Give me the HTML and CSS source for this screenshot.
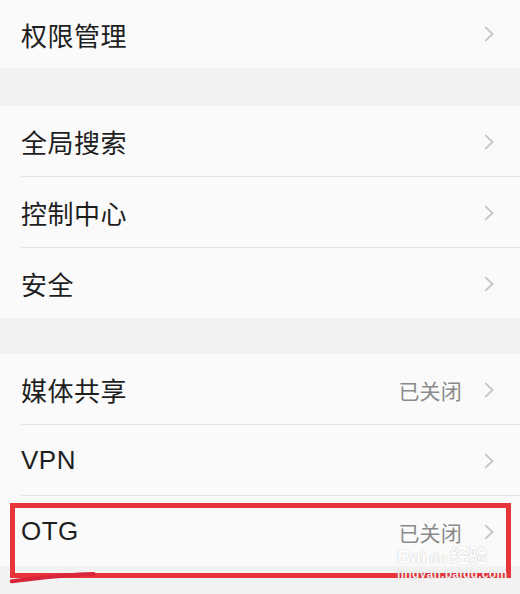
FILE: index.html
```html
<!DOCTYPE html>
<html lang="zh-CN">
<head>
<meta charset="utf-8">
<title>设置</title>
<link rel="stylesheet" href="styles.css">
</head>
<body>
<div class="screen">
  <div class="group">
    <div class="row row-first"><span class="label">权限管理</span><span class="right"><svg class="chev" viewBox="0 0 10 16"><path d="M1.2 1.2 L8.6 8 L1.2 14.8"/></svg></span></div>
  </div>
  <div class="gap gap-a"></div>
  <div class="group">
    <div class="row"><span class="label">全局搜索</span><span class="right"><svg class="chev" viewBox="0 0 10 16"><path d="M1.2 1.2 L8.6 8 L1.2 14.8"/></svg></span></div>
    <div class="row"><span class="label">控制中心</span><span class="right"><svg class="chev" viewBox="0 0 10 16"><path d="M1.2 1.2 L8.6 8 L1.2 14.8"/></svg></span></div>
    <div class="row"><span class="label">安全</span><span class="right"><svg class="chev" viewBox="0 0 10 16"><path d="M1.2 1.2 L8.6 8 L1.2 14.8"/></svg></span></div>
  </div>
  <div class="gap gap-b"></div>
  <div class="group">
    <div class="row"><span class="label">媒体共享</span><span class="right"><span class="value">已关闭</span><svg class="chev" viewBox="0 0 10 16"><path d="M1.2 1.2 L8.6 8 L1.2 14.8"/></svg></span></div>
    <div class="row"><span class="label">VPN</span><span class="right"><svg class="chev" viewBox="0 0 10 16"><path d="M1.2 1.2 L8.6 8 L1.2 14.8"/></svg></span></div>
    <div class="row"><span class="label">OTG</span><span class="right"><span class="value">已关闭</span><svg class="chev" viewBox="0 0 10 16"><path d="M1.2 1.2 L8.6 8 L1.2 14.8"/></svg></span></div>
  </div>
  <div class="gap"></div>

  <div class="highlight"></div>
  <svg class="swoosh" viewBox="0 0 100 20"><path d="M3 17 C 30 14, 55 10, 94 9"/></svg>
  <div class="watermark">
    <div class="wm-top">Bai<span class="wm-paw">du</span>经验</div>
    <div class="wm-url">jingyan.baidu.com</div>
  </div>
</div>
</body>
</html>
```

FILE: styles.css
```css
html, body {
  margin: 0;
  padding: 0;
}
body {
  background: #f2f2f2;
  font-family: "Liberation Sans", "Noto Sans CJK SC", sans-serif;
}
.screen {
  position: relative;
  width: 520px;
  height: 594px;
  overflow: hidden;
  background: #f2f2f2;
}
.group {
  background: #fafafa;
}
.row {
  height: 70px;
  margin-left: 21px;
  padding-right: 26px;
  padding-top: 1px;
  box-sizing: border-box;
  display: flex;
  align-items: center;
  justify-content: space-between;
  border-top: 1px solid #e3e3e3;
}
.group .row:first-child {
  border-top: none;
}
.row + .row {
  height: 71px;
}
.row-first {
  height: 68px;
  padding-top: 0;
}
.label {
  font-size: 26px;
  color: #1e1e1e;
  letter-spacing: 0.5px;
}
.right {
  display: flex;
  align-items: center;
  gap: 22px;
}
.value {
  font-family: "Noto Sans CJK SC", sans-serif;
  font-size: 21px;
  color: #8a8a8a;
  letter-spacing: 0.2px;
}
.chev {
  width: 10px;
  height: 16px;
  fill: none;
  stroke: #c4c4c4;
  stroke-width: 1.8;
}
.gap {
  height: 28px;
}
.gap-a {
  height: 38px;
}
.gap-b {
  height: 36px;
}
.highlight {
  position: absolute;
  left: 10px;
  top: 503px;
  width: 501px;
  height: 75px;
  box-sizing: border-box;
  border: 5px solid #e8353c;
}
.swoosh {
  position: absolute;
  left: 9px;
  top: 566px;
  width: 90px;
  height: 18px;
  fill: none;
  stroke: #d8253a;
  stroke-width: 4.5;
  stroke-linecap: round;
}
.watermark {
  position: absolute;
  left: 397px;
  top: 547px;
  color: #ffffff;
  text-shadow: 0 0 1px rgba(0, 0, 0, 0.35);
  font-family: "Liberation Sans", "Noto Sans CJK SC", sans-serif;
  line-height: 1;
}
.wm-top {
  font-size: 19px;
  font-weight: bold;
  opacity: 0.9;
}
.wm-paw {
  font-size: 14px;
  margin: 0 3px;
}
.wm-url {
  font-size: 12px;
  font-weight: bold;
  margin-top: 2px;
  letter-spacing: 0.3px;
  opacity: 0.9;
}
```
